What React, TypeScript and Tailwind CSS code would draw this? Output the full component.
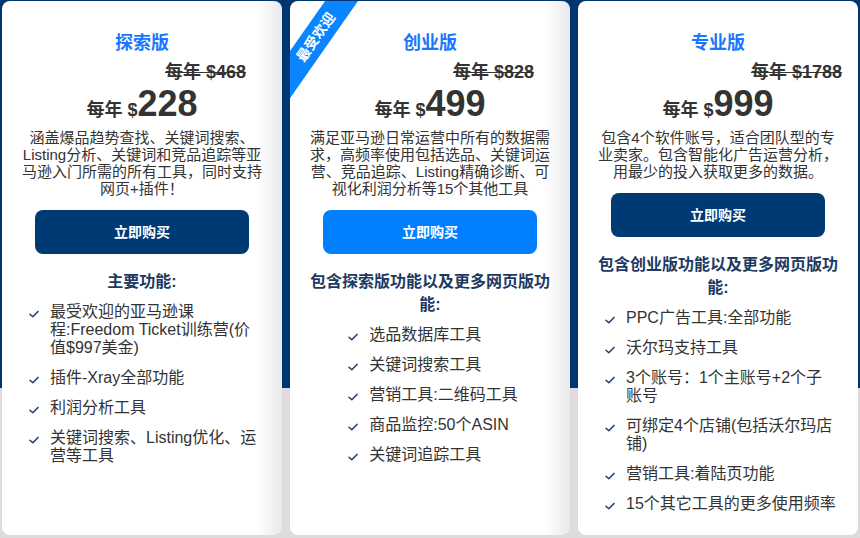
import React from 'react'

type Plan = {
  name: string
  oldPrice: string
  price: string
  desc: string
  heading: string
  features: string[]
  button: string
  fade: boolean
  oldPad: string
  popular?: boolean
}

const plans: Plan[] = [
  {
    name: '探索版',
    oldPrice: '$468',
    price: '228',
    desc: '涵盖爆品趋势查找、关键词搜索、Listing分析、关键词和竞品追踪等亚马逊入门所需的所有工具，同时支持网页+插件！',
    heading: '主要功能:',
    features: [
      '最受欢迎的亚马逊课程:Freedom Ticket训练营(价值$997美金)',
      '插件-Xray全部功能',
      '利润分析工具',
      '关键词搜索、Listing优化、运营等工具',
    ],
    button: 'bg-[#003a75]',
    fade: true,
    oldPad: 'pl-[163px]',
  },
  {
    name: '创业版',
    oldPrice: '$828',
    price: '499',
    desc: '满足亚马逊日常运营中所有的数据需求，高频率使用包括选品、关键词运营、竞品追踪、Listing精确诊断、可视化利润分析等15个其他工具',
    heading: '包含探索版功能以及更多网页版功能:',
    features: ['选品数据库工具', '关键词搜索工具', '营销工具:二维码工具', '商品监控:50个ASIN', '关键词追踪工具'],
    button: 'bg-[#0080ff]',
    fade: true,
    oldPad: 'pl-[163px]',
    popular: true,
  },
  {
    name: '专业版',
    oldPrice: '$1788',
    price: '999',
    desc: '包含4个软件账号，适合团队型的专业卖家。包含智能化广告运营分析，用最少的投入获取更多的数据。',
    heading: '包含创业版功能以及更多网页版功能:',
    features: [
      'PPC广告工具:全部功能',
      '沃尔玛支持工具',
      '3个账号：1个主账号+2个子账号',
      '可绑定4个店铺(包括沃尔玛店铺)',
      '营销工具:着陆页功能',
      '15个其它工具的更多使用频率',
    ],
    button: 'bg-[#003a75]',
    fade: false,
    oldPad: 'pl-[173px]',
  },
]

function Check() {
  return (
    <svg width="10" height="8" viewBox="0 0 10 8" className="mt-[7px] shrink-0">
      <path d="M1 4.2 L3.8 6.8 L9 1.4" fill="none" stroke="#1f3f6e" strokeWidth="1.5" strokeLinecap="round" strokeLinejoin="round" />
    </svg>
  )
}

function PlanCard({ plan }: { plan: Plan }) {
  return (
    <div
      className={`relative w-[280px] h-[534px] shrink-0 overflow-hidden rounded-lg pt-[30px] ${
        plan.fade ? 'bg-[linear-gradient(to_right,#ffffff_91%,#e9e9e9)]' : 'bg-white'
      }`}
    >
      {plan.popular && (
        <div className="absolute left-[-54px] top-[23px] w-[160px] h-[27px] -rotate-[55deg] bg-[#0a85ff] flex items-center justify-center text-white text-[14px] font-bold">
          最受欢迎
        </div>
      )}
      <h3 className="text-center text-[18px] leading-[24px] font-bold text-[#1677ff]">{plan.name}</h3>
      <div className={`mt-[7px] text-[18px] leading-[20px] font-bold text-[#333] line-through ${plan.oldPad}`}>
        每年 {plan.oldPrice}
      </div>
      <div className="mt-[4px] flex items-baseline justify-center text-[#333] font-bold">
        <span className="text-[18px]">每年 $</span>
        <span className="text-[36px] leading-[36px]">{plan.price}</span>
      </div>
      <p className="mt-[5px] px-[19px] text-center text-[15px] leading-[17px] text-[#333]">{plan.desc}</p>
      <button
        className={`mx-auto mt-[13px] flex h-[44px] w-[214px] items-center justify-center rounded-lg text-[14px] font-bold text-white ${plan.button}`}
      >
        立即购买
      </button>
      <h4 className="mt-4 px-4 text-center text-[16px] leading-[23px] font-bold text-[#1d3a63]">{plan.heading}</h4>
      <div className="mt-[10px] flex justify-center pl-[6px]">
        <ul className="w-fit max-w-[232px] space-y-3">
          {plan.features.map((f) => (
            <li key={f} className="flex gap-[11px] text-[16px] leading-[18px] text-[#333]">
              <Check />
              <span>{f}</span>
            </li>
          ))}
        </ul>
      </div>
    </div>
  )
}

export default function App() {
  return (
    <div className="h-[538px] w-[860px] overflow-hidden bg-[linear-gradient(to_bottom,#003670_388px,#dcdcdc_388px)] font-['Liberation_Sans','Noto_Sans_CJK_SC',sans-serif]">
      <div className="flex gap-2 px-[2px] pt-[1px]">
        {plans.map((p) => (
          <PlanCard key={p.name} plan={p} />
        ))}
      </div>
    </div>
  )
}
